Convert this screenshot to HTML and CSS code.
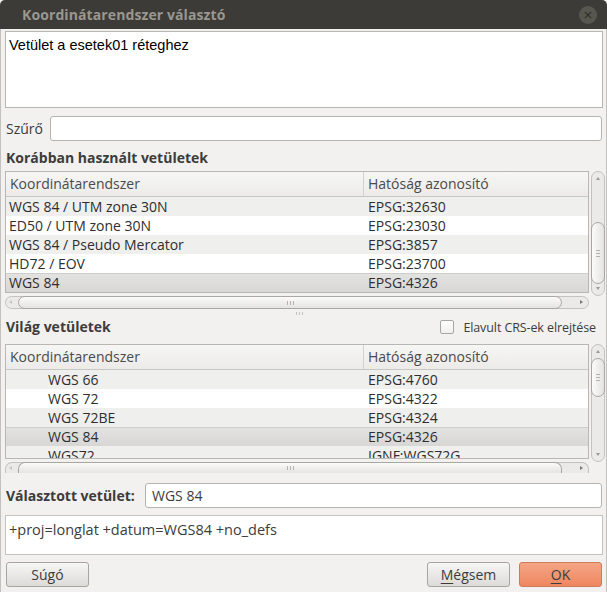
FILE: index.html
```html
<!DOCTYPE html>
<html lang="hu">
<head>
<meta charset="utf-8">
<title>Koordinátarendszer választó</title>
<link rel="stylesheet" href="styles.css">
</head>
<body>
<div class="window">
  <div class="titlebar">
    <span class="title">Koordinátarendszer választó</span>
    <span class="close">×</span>
  </div>
  <div class="content">
    <div class="desc">Vetület a esetek01 réteghez</div>
    <div class="filter-row">
      <span class="label">Szűrő</span>
      <div class="input"></div>
    </div>
    <div class="heading h1">Korábban használt vetületek</div>
    <div class="list l1">
      <div class="table t1">
        <div class="thead">
          <div class="th c1">Koordinátarendszer</div>
          <div class="th c2">Hatóság azonosító</div>
        </div>
        <div class="tr alt"><div class="td c1">WGS 84 / UTM zone 30N</div><div class="td c2">EPSG:32630</div></div>
        <div class="tr"><div class="td c1">ED50 / UTM zone 30N</div><div class="td c2">EPSG:23030</div></div>
        <div class="tr alt"><div class="td c1">WGS 84 / Pseudo Mercator</div><div class="td c2">EPSG:3857</div></div>
        <div class="tr"><div class="td c1">HD72 / EOV</div><div class="td c2">EPSG:23700</div></div>
        <div class="tr sel"><div class="td c1">WGS 84</div><div class="td c2">EPSG:4326</div></div>
      </div>
      <div class="vscroll v1">
        <span class="arr up"></span>
        <div class="vthumb"><span class="grip"></span></div>
        <span class="arr down"></span>
      </div>
      <div class="hscroll">
        <span class="harr left"></span>
        <div class="hthumb"><span class="hgrip"></span></div>
        <span class="harr right"></span>
      </div>
    </div>
    <div class="splitter"><span></span></div>
    <div class="world-head">
      <span class="heading">Világ vetületek</span>
      <span class="check"><span class="box"></span>Elavult CRS-ek elrejtése</span>
    </div>
    <div class="list l2">
      <div class="table t2">
        <div class="thead">
          <div class="th c1">Koordinátarendszer</div>
          <div class="th c2">Hatóság azonosító</div>
        </div>
        <div class="tr alt"><div class="td c1 ind">WGS 66</div><div class="td c2">EPSG:4760</div></div>
        <div class="tr"><div class="td c1 ind">WGS 72</div><div class="td c2">EPSG:4322</div></div>
        <div class="tr alt"><div class="td c1 ind">WGS 72BE</div><div class="td c2">EPSG:4324</div></div>
        <div class="tr sel"><div class="td c1 ind">WGS 84</div><div class="td c2">EPSG:4326</div></div>
        <div class="tr alt"><div class="td c1 ind">WGS72</div><div class="td c2">IGNF:WGS72G</div></div>
      </div>
      <div class="vscroll v2">
        <span class="arr up"></span>
        <div class="vthumb"><span class="grip"></span></div>
        <span class="arr down"></span>
      </div>
      <div class="hscroll h2">
        <span class="harr left"></span>
        <div class="hthumb"><span class="hgrip"></span></div>
        <span class="harr right"></span>
      </div>
    </div>
    <div class="selected-row">
      <span class="heading">Választott vetület:</span>
      <div class="input">WGS 84</div>
    </div>
    <div class="proj">+proj=longlat +datum=WGS84 +no_defs</div>
    <div class="buttons">
      <button class="btn">Súgó</button>
      <span class="spacer"></span>
      <button class="btn"><u>M</u>égsem</button>
      <button class="btn ok"><u>O</u>K</button>
    </div>
  </div>
</div>
</body>
</html>
```

FILE: styles.css
```css
* { box-sizing: border-box; }
html, body { margin: 0; padding: 0; }
body {
  width: 607px;
  height: 592px;
  overflow: hidden;
  background: #3c3b37;
  font-family: "Open Sans", "Noto Sans", sans-serif;
  font-size: 14px;
  color: #3c3c3c;
}
.window {
  width: 607px;
  height: 592px;
  display: flex;
  flex-direction: column;
  background: #f2f1f0;
}
.titlebar {
  height: 29px;
  flex: none;
  background: #3c3b37;
  border-radius: 5px 5px 0 0;
  display: flex;
  align-items: center;
  padding-left: 22px;
  padding-right: 10px;
}
.title {
  flex: 1;
  font-weight: bold;
  font-size: 14px;
  color: #9a978f;
  letter-spacing: 0.1px;
}
.close {
  width: 18px;
  height: 18px;
  border-radius: 50%;
  background: #58574f;
  color: #2e2d29;
  font-size: 13px;
  line-height: 17px;
  text-align: center;
  font-family: "DejaVu Sans", sans-serif;
}
.content {
  flex: 1;
  display: flex;
  flex-direction: column;
  padding: 2px 3px 0 4px;
  border-left: 1px solid #c3c1bc;
  border-right: 1px solid #c3c1bc;
}
.desc {
  height: 77px;
  flex: none;
  background: #fff;
  border: 1px solid #b9b7b2;
  padding: 5px 3px;
  font-family: "Liberation Sans", Arial, sans-serif;
  font-size: 14.5px;
  color: #000;
  line-height: 16px;
}
.filter-row {
  display: flex;
  align-items: center;
  margin-top: 8px;
  height: 25px;
  flex: none;
}
.label { width: 45px; padding-left: 1px; }
.input {
  flex: 1;
  height: 25px;
  background: #fff;
  border: 1px solid #b6b4af;
  border-radius: 3px;
  margin-right: 1px;
  padding: 3px 6px;
  line-height: 17px;
  color: #3c3c3c;
}
.heading {
  font-weight: bold;
  line-height: 16px;
  padding-left: 1px;
}
.h1 { margin-top: 9px; margin-bottom: 5px; }
.list {
  display: grid;
  grid-template-columns: 584px 14px;
  column-gap: 2px;
  row-gap: 3px;
  flex: none;
}
.l1 { grid-template-rows: 122px 13px; }
.l2 { grid-template-rows: 115px 11px; }
.table {
  background: #fff;
  border: 1px solid #b9b7b2;
  overflow: hidden;
}
.thead {
  display: flex;
  height: 25px;
  border-bottom: 1px solid #c9c7c3;
  background: linear-gradient(#f6f6f5, #ecebea);
}
.th {
  line-height: 24px;
  color: #4a4a4a;
}
.c1 { width: 358px; padding-left: 3px; }
.th.c1 { padding-left: 4px; border-right: 1px solid #d3d1cd; }
.c2 { flex: 1; padding-left: 4px; }
.tr {
  display: flex;
  height: 19px;
  line-height: 19px;
  color: #2e2e2e;
}
.tr.alt { background: #efefee; }
.tr.sel { background: linear-gradient(#e2e2e1, #d8d7d6); border-top: 1px solid #cfcdca; line-height: 18px; }
.td.ind { padding-left: 42px; }
.vscroll {
  align-self: start;
  border: 1px solid #c4c2bd;
  border-radius: 7px;
  background: #eceae8;
  display: flex;
  flex-direction: column;
  align-items: stretch;
}
.v1 { height: 125px; }
.v2 { height: 118px; }
.arr {
  height: 10px;
  flex: none;
  position: relative;
}
.arr.up::after, .arr.down::after {
  content: "";
  position: absolute;
  left: 4px;
  border-left: 2px solid transparent;
  border-right: 2px solid transparent;
}
.arr.up::after { top: 5px; border-bottom: 3px solid #9a9894; }
.arr.down::after { top: 2px; border-top: 3px solid #9a9894; }
.v1 .arr.up { margin-bottom: 40px; }
.v1 .vthumb { height: 62px; }
.v2 .arr.up { margin-bottom: 3px; }
.v2 .vthumb { height: 39px; }
.vthumb {
  flex: none;
  margin: 0 -1px;
  border: 1px solid #a9a7a3;
  border-radius: 7px;
  background: linear-gradient(to right, #fbfbfa, #e4e3e1);
  display: flex;
  align-items: center;
  justify-content: center;
}
.arr.down { margin-top: auto; }
.grip {
  width: 4px;
  height: 7px;
  background: repeating-linear-gradient(#b4b2ad 0 1px, transparent 1px 3px);
}
.hscroll {
  grid-column: 1;
  border: 1px solid #c4c2bd;
  border-radius: 7px;
  background: #eceae8;
  display: flex;
  align-items: stretch;
}
.harr { width: 12px; flex: none; position: relative; }
.harr::after {
  content: "";
  position: absolute;
  top: 3px;
  border-top: 2px solid transparent;
  border-bottom: 2px solid transparent;
}
.harr.left::after { left: 3px; border-right: 3px solid #c8c6c2; }
.harr.right::after { left: 4px; border-left: 3px solid #7c7a76; }
.hthumb {
  flex: none;
  width: 544px;
  margin: -1px 0;
  border: 1px solid #a9a7a3;
  border-radius: 7px;
  background: linear-gradient(#fbfbfa, #e4e3e1);
  display: flex;
  align-items: center;
  justify-content: center;
}
.harr.right { margin-left: auto; }
.hgrip {
  width: 7px;
  height: 4px;
  background: repeating-linear-gradient(to right, #b4b2ad 0 1px, transparent 1px 3px);
}
.splitter {
  height: 9px;
  flex: none;
  display: flex;
  justify-content: center;
  align-items: center;
}
.splitter span {
  width: 7px;
  height: 3px;
  margin-right: 10px;
  background: repeating-linear-gradient(to right, #c2c0bb 0 1px, transparent 1px 3px);
}
.world-head {
  display: flex;
  align-items: center;
  justify-content: space-between;
  height: 18px;
  margin-bottom: 8px;
  flex: none;
}
.check {
  display: flex;
  align-items: center;
  color: #3c3c3c;
  padding-right: 7px;
  font-size: 12.5px;
  letter-spacing: -0.1px;
}
.box {
  width: 14px;
  height: 14px;
  border: 1px solid #a8a6a1;
  border-radius: 2px;
  background: linear-gradient(#ffffff, #f0efee);
  margin-right: 9px;
}
.h2 { border-bottom: none; border-radius: 7px 7px 0 0; }
.h2 .hthumb { border-bottom: none; border-radius: 7px 7px 0 0; margin-bottom: 0; }
.selected-row {
  display: flex;
  align-items: center;
  margin-top: 10px;
  height: 25px;
  flex: none;
}
.selected-row .heading { width: 140px; }
.selected-row .input { height: 25px; }
.proj {
  margin-top: 7px;
  height: 40px;
  flex: none;
  background: #fff;
  border: 1px solid #c4c2bd;
  padding: 6px 3px;
  line-height: 16px;
  font-size: 14.5px;
  color: #3c3c3c;
}
.buttons {
  display: flex;
  margin-top: 7px;
  gap: 9px;
  flex: none;
}
.spacer { flex: 1; }
.btn {
  width: 83px;
  height: 25px;
  font-family: inherit;
  font-size: 14px;
  color: #3c3c3c;
  border: 1px solid #a7a5a0;
  border-radius: 3px;
  background: linear-gradient(#f6f6f5, #dcdbd8);
  padding: 0;
  margin-left: 1px;
}
.btn u { text-underline-offset: 3px; }
.btn.ok {
  margin-left: 0;
  margin-right: 1px;
  border-color: #cc7b5b;
  background: linear-gradient(#f5a585, #ee8760);
}
```
